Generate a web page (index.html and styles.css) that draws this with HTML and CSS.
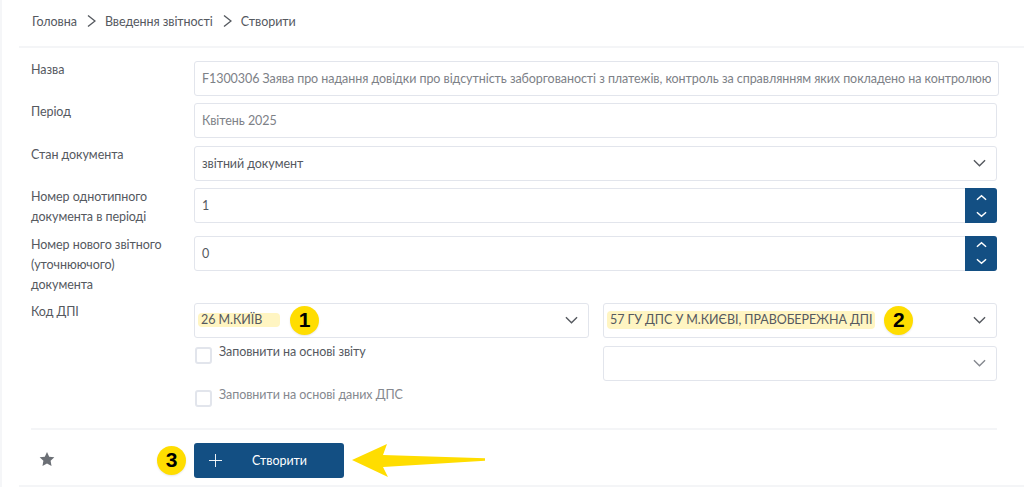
FILE: index.html
```html
<!DOCTYPE html>
<html lang="uk">
<head>
    <meta charset="UTF-8">
    <meta name="viewport" content="width=device-width, initial-scale=1.0">
    <title>Створити</title>
    <link rel="stylesheet" href="styles.css">
</head>
<body>
    <div class="page">
        <div class="crumbs">
            <a href="#">Головна</a>
            <svg class="crumb-sep" viewBox="0 0 10 14"><path d="M2 1.500l7 5.500-7 5.500"/></svg>
            <a href="#">Введення звітності</a>
            <svg class="crumb-sep" viewBox="0 0 10 14"><path d="M2 1.500l7 5.500-7 5.500"/></svg>
            <span>Створити</span>
        </div>

        <form class="report-form">
            <div class="form-row">
                <label class="form-label">Назва</label>
                <div class="field field-disabled"><span class="field-text">F1300306 Заява про надання довідки про відсутність заборгованості з платежів, контроль за справлянням яких покладено на контролюю</span></div>
            </div>
            <div class="form-row">
                <label class="form-label">Період</label>
                <div class="field field-disabled"><span class="field-text">Квітень 2025</span></div>
            </div>
            <div class="form-row">
                <label class="form-label">Стан документа</label>
                <div class="field select">
                    <span class="select-text">звітний документ</span>
                    <svg class="chevron" viewBox="0 0 14 8"><path d="M1 1l6 6 6-6"/></svg>
                </div>
            </div>
            <div class="form-row">
                <label class="form-label">Номер однотипного документа в періоді</label>
                <div class="field number">
                    <span class="number-value">1</span>
                    <div class="stepper">
                        <svg viewBox="0 0 12 7"><path d="M1 6l5-4.500L11 6"/></svg>
                        <svg viewBox="0 0 12 7"><path d="M1 1l5 4.500L11 1"/></svg>
                    </div>
                </div>
            </div>
            <div class="form-row">
                <label class="form-label">Номер нового звітного (уточнюючого) документа</label>
                <div class="field number">
                    <span class="number-value">0</span>
                    <div class="stepper">
                        <svg viewBox="0 0 12 7"><path d="M1 6l5-4.500L11 6"/></svg>
                        <svg viewBox="0 0 12 7"><path d="M1 1l5 4.500L11 1"/></svg>
                    </div>
                </div>
            </div>
            <div class="form-row">
                <label class="form-label">Код ДПІ</label>
                <div class="tax-columns">
                    <div class="tax-column">
                        <div class="field select select-marked">
                            <span class="mark mark-short">26 М.КИЇВ</span>
                            <span class="badge badge-one">1</span>
                            <svg class="chevron" viewBox="0 0 14 8"><path d="M1 1l6 6 6-6"/></svg>
                        </div>
                        <div class="check-row">
                            <span class="checkbox"></span>
                            <span class="check-text">Заповнити на основі звіту</span>
                        </div>
                        <div class="check-row check-disabled">
                            <span class="checkbox"></span>
                            <span class="check-text">Заповнити на основі даних ДПС</span>
                        </div>
                    </div>
                    <div class="tax-column">
                        <div class="field select select-marked">
                            <span class="mark">57 ГУ ДПС У М.КИЄВІ, ПРАВОБЕРЕЖНА ДПІ</span>
                            <span class="badge badge-two">2</span>
                            <svg class="chevron" viewBox="0 0 14 8"><path d="M1 1l6 6 6-6"/></svg>
                        </div>
                        <div class="field select select-empty">
                            <svg class="chevron" viewBox="0 0 14 8"><path d="M1 1l6 6 6-6"/></svg>
                        </div>
                    </div>
                </div>
            </div>

            <div class="form-footer">
                <div class="footer-side">
                    <svg class="star" viewBox="0 0 24 24"><path d="M12 1.500l3.300 7 7.700 1-5.600 5.300 1.400 7.700-6.800-3.700-6.800 3.700 1.400-7.700L1 9.500l7.700-1z"/></svg>
                    <span class="badge">3</span>
                </div>
                <button type="button" class="create-btn">
                    <svg class="plus" viewBox="0 0 14 14"><path d="M7 0v14M0 7h14"/></svg>
                    <span>Створити</span>
                </button>
                <svg class="arrow" viewBox="0 0 136 35"><path d="M1 17L36 1 32 12 134 15.300V17.700L32 24 37 34z"/></svg>
            </div>
        </form>
    </div>
</body>
</html>
```

FILE: styles.css
```css
* {
    box-sizing: border-box;
}
html, body {
    margin: 0;
    padding: 0;
    height: 100%;
    overflow: hidden;
}
body {
    background: #fff;
    border-left: 2px solid #f5f6f8;
    font-family: "Lato", "Noto Sans", sans-serif;
    font-size: 12.5px;
    letter-spacing: -.06px;
    color: #55595f;
}
a {
    color: inherit;
    text-decoration: none;
}
.page {
    margin-left: 17px;
    height: 487px;
    border-bottom: 2px solid #f4f5f7;
}
.crumbs {
    display: flex;
    align-items: center;
    gap: 9px;
    height: 48px;
    padding: 0 0 4px 13px;
    border-bottom: 2px solid #f4f5f7;
}
.crumb-sep {
    width: 10px;
    height: 14px;
    fill: none;
    stroke: #55595f;
    stroke-width: 1.4;
}
.report-form {
    padding: 13px 27px 0 12px;
}
.form-row {
    display: grid;
    grid-template-columns: 163px 1fr;
    margin-bottom: 7.4px;
}
.form-label {
    display: block;
    line-height: 20px;
    margin-top: -1px;
    padding: 0 28px 1px 0;
}
.field {
    display: flex;
    align-items: center;
    height: 35px;
    padding: 0 7px;
    background: #fff;
    border: 1px solid #e2e5ec;
    border-radius: 3px;
}
.field-disabled {
    color: #7d8187;
}
.field-text {
    display: block;
    margin-top: -1px;
    white-space: nowrap;
    overflow: hidden;
}
.select {
    padding-right: 10px;
}
.select-text {
    flex: 1;
}
.chevron {
    margin-left: auto;
    width: 13px;
    height: 8px;
    fill: none;
    stroke: #55595f;
    stroke-width: 1.5;
}
.select-empty .chevron {
    stroke: #85888f;
}
.number {
    padding-right: 0;
}
.number-value {
    flex: 1;
}
.stepper {
    display: flex;
    flex-direction: column;
    align-items: center;
    justify-content: center;
    gap: 10px;
    width: 32px;
    height: 35px;
    margin-right: -1px;
    background: #134f83;
    border-radius: 0 3px 3px 0;
}
.stepper svg {
    width: 11px;
    height: 7px;
    fill: none;
    stroke: #fff;
    stroke-width: 1.6;
}
.tax-columns {
    display: grid;
    grid-template-columns: 395px 394px;
    gap: 14px;
}
.tax-column {
    display: flex;
    flex-direction: column;
    gap: 8px;
}
.select-marked {
    padding-left: 3px;
}
.mark {
    padding: 0 3px;
    line-height: 18px;
    background: #fff5c2;
    border-radius: 4px;
    white-space: nowrap;
}
.mark-short {
    width: 82px;
    line-height: 14px;
}
.badge {
    display: flex;
    align-items: center;
    justify-content: center;
    flex: none;
    width: 29px;
    height: 29px;
    background: #ffdd00;
    border-radius: 50%;
    box-shadow: 0 1px 2px rgba(0, 0, 0, .1);
    font-family: "Liberation Sans", sans-serif;
    font-size: 21px;
    font-weight: 700;
    letter-spacing: 0;
    color: #000;
}
.badge-one {
    margin-left: 10px;
}
.badge-two {
    margin-left: 9px;
}
.check-row {
    display: flex;
    gap: 7px;
    height: 35px;
    line-height: 14px;
    padding-left: 1px;
}
.check-disabled {
    height: 28px;
    color: #85888f;
}
.check-text {
    margin-top: -1px;
}
.checkbox {
    width: 17px;
    height: 17px;
    margin-top: 1px;
    background: #fff;
    border: 2px solid #e2e5ec;
    border-radius: 3px;
}
.form-footer {
    display: flex;
    align-items: center;
    margin-top: 11.500px;
    padding-top: 12.500px;
    border-top: 2px solid #f4f5f7;
}
.footer-side {
    display: flex;
    align-items: center;
    justify-content: space-between;
    width: 163px;
    padding: 0 8px 0 8px;
}
.star {
    width: 16px;
    height: 16px;
    margin-top: -2px;
    fill: #6b6f75;
}
.create-btn {
    display: flex;
    align-items: center;
    width: 150px;
    height: 35px;
    padding: 0 0 0 15px;
    background: #134f83;
    border: none;
    border-radius: 3px;
    font: inherit;
    letter-spacing: inherit;
    color: #fff;
}
.plus {
    width: 13px;
    height: 13px;
    margin-right: 30px;
    fill: none;
    stroke: #fff;
    stroke-width: 1;
}
.arrow {
    width: 136px;
    height: 35px;
    margin-left: 7px;
    fill: #ffdd00;
}
```
